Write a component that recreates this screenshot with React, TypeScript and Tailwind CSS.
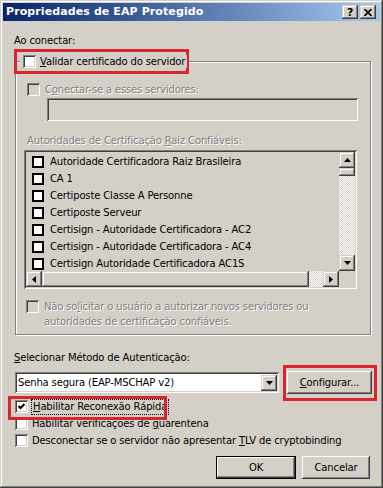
import React from "react";

const FONT = "font-['DejaVu_Sans',sans-serif]";
const RAISED =
  "shadow-[inset_-1px_-1px_#404040,inset_1px_1px_#ffffff,inset_-2px_-2px_#808080,inset_2px_2px_#d4d0c8]";
const SBRAISED =
  "shadow-[inset_-1px_-1px_#404040,inset_1px_1px_#d4d0c8,inset_-2px_-2px_#808080,inset_2px_2px_#ffffff]";
const SUNKEN =
  "shadow-[inset_1px_1px_#808080,inset_-1px_-1px_#ffffff,inset_2px_2px_#404040,inset_-2px_-2px_#d4d0c8]";
const DIS = "text-[#808080] [text-shadow:1px_1px_0_#ffffff]";
const DITHER =
  "bg-[repeating-conic-gradient(#ffffff_0_25%,#d4d0c8_0_50%)] bg-[length:2px_2px]";

function Check({ disabled, checked }: { disabled?: boolean; checked?: boolean }) {
  return (
    <div
      className={`w-[13px] h-[13px] shrink-0 flex items-center justify-center ${
        disabled ? "bg-[#d4d0c8]" : "bg-white"
      } ${SUNKEN}`}
    >
      {checked && (
        <svg width="7" height="7" viewBox="0 0 7 7">
          <path d="M0.5 3 L2.5 5 L6.5 1" stroke="black" strokeWidth="2" fill="none" />
        </svg>
      )}
    </div>
  );
}

function ListCheck() {
  return <div className="w-[12px] h-[12px] shrink-0 border-2 border-black bg-white" />;
}

function Arrow({ dir }: { dir: "up" | "down" | "left" | "right" }) {
  const pts: Record<string, string> = {
    up: "3.5,0 7,4 0,4",
    down: "0,0 7,0 3.5,4",
    left: "4,0 4,7 0,3.5",
    right: "0,0 0,7 4,3.5",
  };
  const vert = dir === "up" || dir === "down";
  return (
    <svg width={vert ? 7 : 4} height={vert ? 4 : 7} viewBox={vert ? "0 0 7 4" : "0 0 4 7"}>
      <polygon points={pts[dir]} fill="black" />
    </svg>
  );
}

function SBtn({ dir }: { dir: "up" | "down" | "left" | "right" }) {
  return (
    <div className={`w-[16px] h-[16px] shrink-0 bg-[#d4d0c8] flex items-center justify-center ${SBRAISED}`}>
      <Arrow dir={dir} />
    </div>
  );
}

const CERTS = [
  "Autoridade Certificadora Raiz Brasileira",
  "CA 1",
  "Certiposte Classe A Personne",
  "Certiposte Serveur",
  "Certisign - Autoridade Certificadora - AC2",
  "Certisign - Autoridade Certificadora - AC4",
  "Certisign Autoridade Certificadora AC1S",
];

function CertList() {
  return (
    <div className={`w-[333px] h-[139px] mt-[3px] bg-[#d4d0c8] p-[2px] flex flex-col ${SUNKEN}`}>
      <div className="flex flex-1 min-h-0">
        <div className="flex-1 pt-[1px] overflow-hidden">
          {CERTS.map((c) => (
            <div key={c} className="h-[17px] flex items-center pl-[6px] gap-[6px] whitespace-nowrap">
              <ListCheck />
              <span>{c}</span>
            </div>
          ))}
        </div>
        <div className="w-[16px] flex flex-col">
          <SBtn dir="up" />
          <div className={`h-[8px] bg-[#d4d0c8] ${SBRAISED}`} />
          <div className={`flex-1 ${DITHER}`} />
          <SBtn dir="down" />
        </div>
      </div>
      <div className="flex h-[16px]">
        <SBtn dir="left" />
        <div className={`w-[267px] bg-[#d4d0c8] ${SBRAISED}`} />
        <div className={`flex-1 ${DITHER}`} />
        <SBtn dir="right" />
        <div className="w-[16px] bg-[#d4d0c8]" />
      </div>
    </div>
  );
}

function Btn({ children, def, w }: { children: React.ReactNode; def?: boolean; w: string }) {
  if (def) {
    return (
      <div className={`${w} h-[23px] border border-black`}>
        <div className={`w-full h-full bg-[#d4d0c8] flex items-center justify-center ${RAISED}`}>
          {children}
        </div>
      </div>
    );
  }
  return (
    <div className={`${w} h-[23px] bg-[#d4d0c8] flex items-center justify-center ${RAISED}`}>{children}</div>
  );
}

export default function App() {
  return (
    <div
      className={`w-[383px] h-[488px] bg-[#d4d0c8] relative overflow-hidden text-black text-[10px] leading-[13px] tracking-[-0.15px] ${FONT} shadow-[inset_-1px_-1px_#404040,inset_1px_1px_#d4d0c8,inset_-2px_-2px_#808080,inset_2px_2px_#ffffff]`}
    >
      {/* Title bar */}
      <div className="mx-[3px] mt-[3px] h-[18px] bg-linear-to-r from-[#0a246a] to-[#a6caf0] flex items-center pl-[3px] pr-[4px]">
        <span className="text-white font-bold text-[11px] leading-[14px] tracking-[0.1px] whitespace-nowrap">
          Propriedades de EAP Protegido
        </span>
        <div className="ml-auto flex gap-[2px]">
          <div className={`w-[16px] h-[14px] bg-[#d4d0c8] flex items-center justify-center font-bold text-[11px] leading-[11px] ${SBRAISED}`}>
            ?
          </div>
          <div className={`w-[16px] h-[14px] bg-[#d4d0c8] flex items-center justify-center ${SBRAISED}`}>
            <svg width="8" height="7" viewBox="0 0 8 7">
              <path d="M0.5 0 L7.5 7 M7.5 0 L0.5 7" stroke="black" strokeWidth="1.6" />
            </svg>
          </div>
        </div>
      </div>

      <div className="ml-[14px] mt-[13px] h-[13px]">Ao conectar:</div>

      {/* Group box */}
      <div className="relative ml-[15px] mt-[14px] w-[356px] h-[274px] border border-[#808080] shadow-[inset_1px_1px_#ffffff,1px_1px_#ffffff] pt-[21px] pl-[8px]">
        <div className="absolute left-[-2px] top-[-13px] w-[175px] h-[25px] border-[3px] border-[#d9252f] flex items-center pl-[3px]">
          <div className="flex items-center gap-[4px] bg-[#d4d0c8] pl-[3px] pr-[2px]">
            <Check />
            <span className="whitespace-nowrap">
              <span className="underline">V</span>alidar certificado do servidor
            </span>
          </div>
        </div>

        <div className="flex items-center ml-[3px] h-[13px] gap-[5px]">
          <Check disabled />
          <span className={DIS}>
            C<span className="underline">o</span>nectar-se a esses servidores:
          </span>
        </div>
        <div className={`ml-[23px] mt-[2px] w-[311px] h-[23px] bg-[#d4d0c8] ${SUNKEN}`} />
        <div className={`ml-[3px] mt-[13px] h-[13px] ${DIS}`}>
          Autoridades de Certificação <span className="underline">R</span>aiz Confiáveis:
        </div>
        <CertList />
        <div className="flex items-start ml-[2px] mt-[11px] gap-[5px]">
          <Check disabled />
          <div className={`leading-[15px] -mt-[1px] ${DIS}`}>
            Não so<span className="underline">l</span>icitar o usuário a autorizar novos servidores ou
            <br />
            autoridades de certificação confiáveis.
          </div>
        </div>
      </div>

      <div className="ml-[14px] mt-[16px] h-[13px]">
        <span className="underline">S</span>elecionar Método de Autenticação:
      </div>

      <div className="ml-[15px] mt-[7px] flex items-center gap-[8px]">
        <div className={`w-[264px] h-[21px] bg-white flex items-center p-[2px] ${SUNKEN}`}>
          <span className="flex-1 pl-[1px] whitespace-nowrap">Senha segura (EAP-MSCHAP v2)</span>
          <SBtn dir="down" />
        </div>
        <div className="relative">
          <Btn w="w-[85px]">
            <span>
              <span className="underline">C</span>onfigurar...
            </span>
          </Btn>
          <div className="absolute left-[-4px] top-[-6px] w-[94px] h-[36px] border-[3px] border-[#d9252f]" />
        </div>
      </div>

      <div className="ml-[15px] mt-[6px] flex flex-col gap-[4px]">
        <div className="relative flex items-center h-[13px] gap-[3px]">
          <Check checked />
          <span className="border border-dotted border-black px-[1px] leading-[14px] whitespace-nowrap">
            <span className="underline">H</span>abilitar Reconexão Rápida
          </span>
          <div className="absolute left-[-7px] top-[-4px] w-[159px] h-[24px] border-[3px] border-[#d9252f]" />
        </div>
        <div className="flex items-center h-[13px] gap-[4px]">
          <Check />
          <span className="whitespace-nowrap">
            Habilitar verificações de <span className="underline">g</span>uarentena
          </span>
        </div>
        <div className="flex items-center h-[13px] gap-[4px]">
          <Check />
          <span className="whitespace-nowrap">
            Desconectar se o servidor não apresentar <span className="underline">T</span>LV de cryptobinding
          </span>
        </div>
      </div>

      <div className="mt-[9px] flex justify-end gap-[6px] pr-[13px]">
        <Btn def w="w-[80px]">OK</Btn>
        <Btn w="w-[68px]">Cancelar</Btn>
      </div>
    </div>
  );
}
